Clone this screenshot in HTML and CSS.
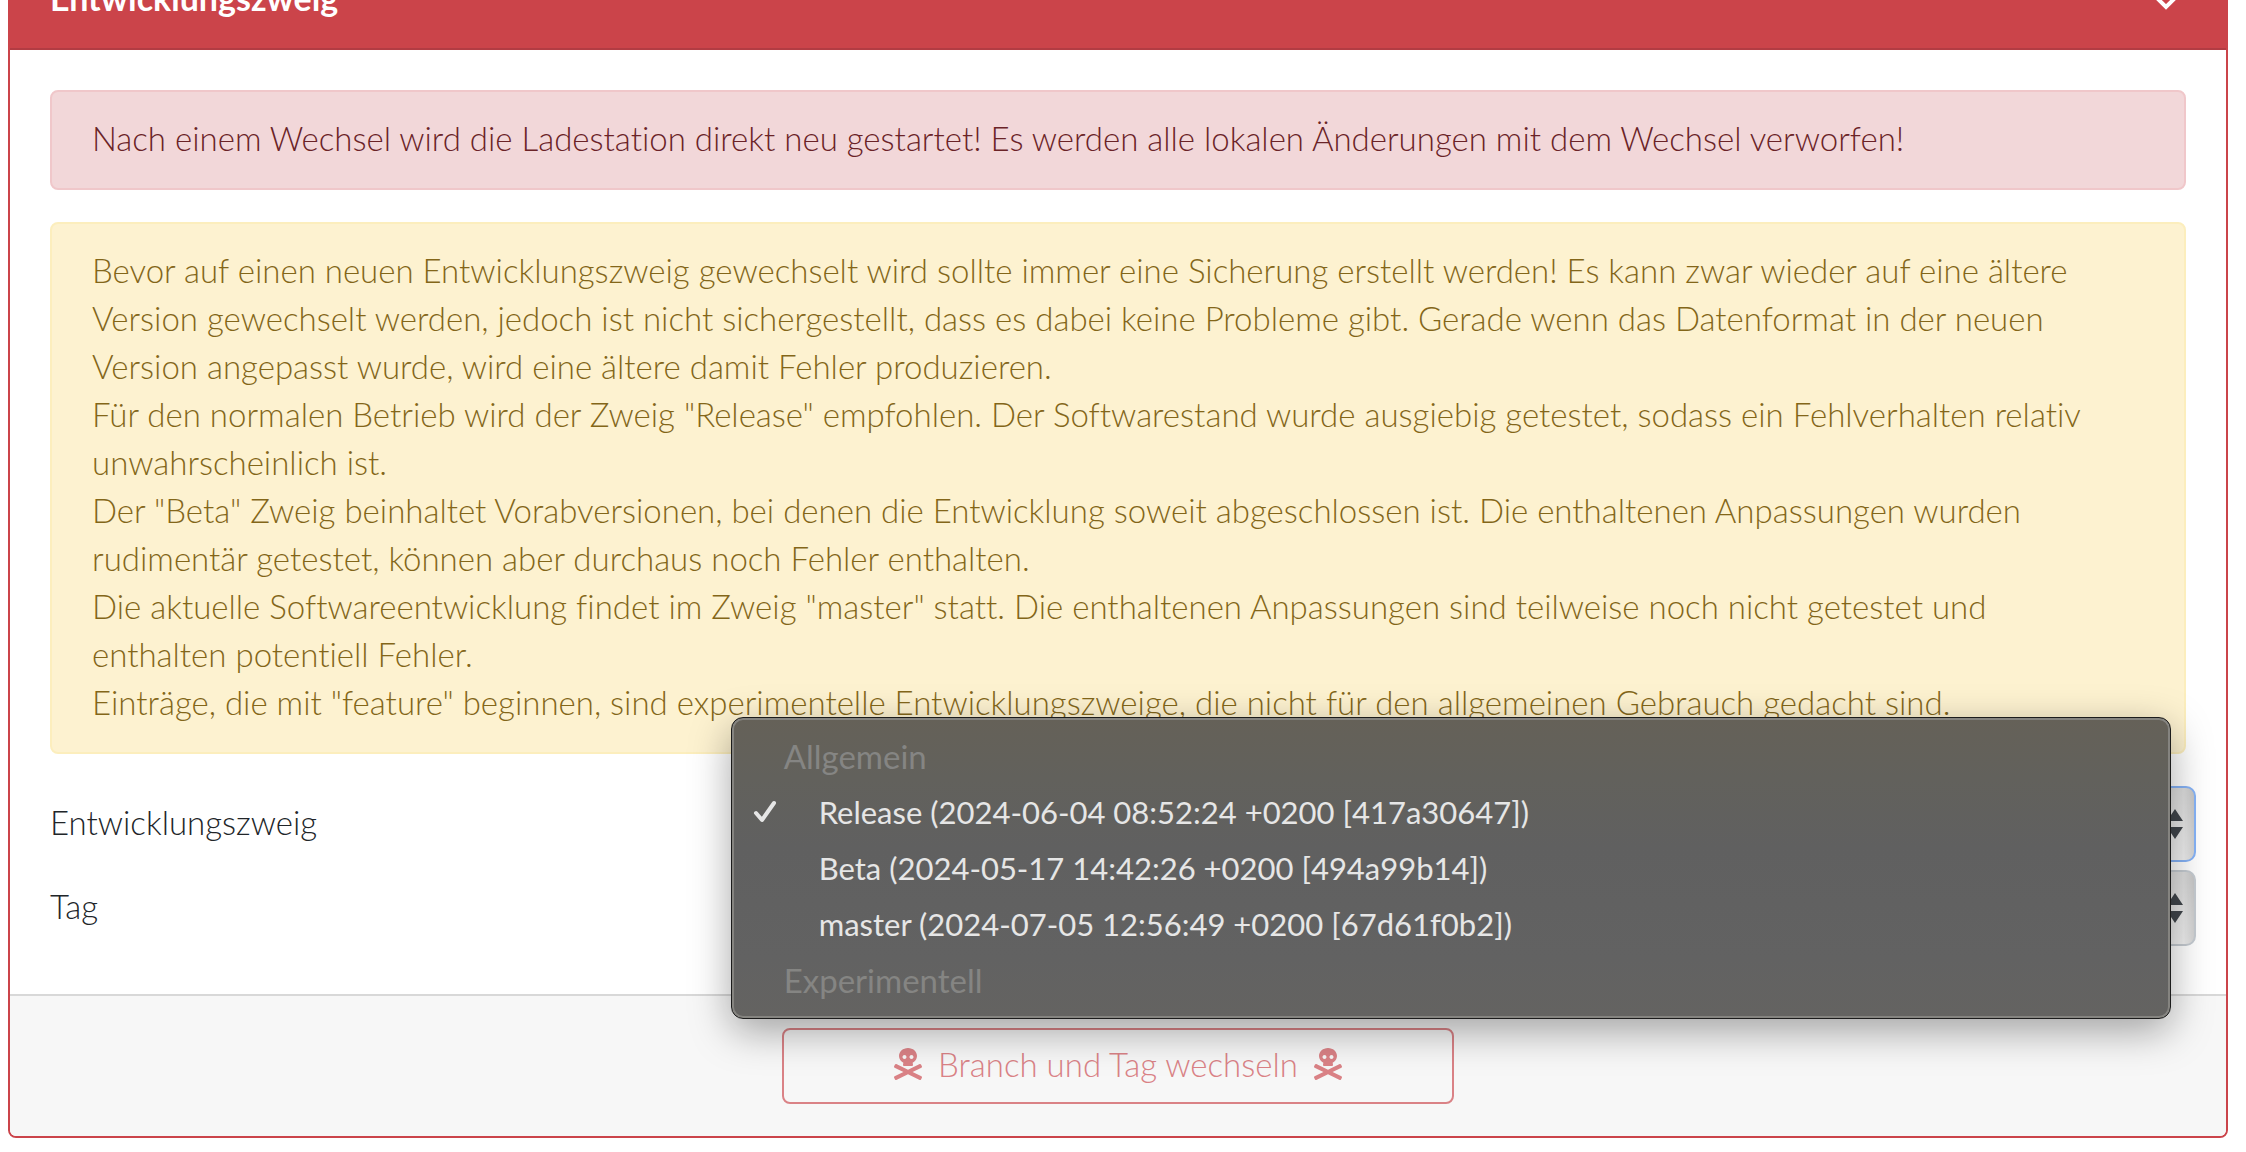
FILE: index.html
```html
<!DOCTYPE html>
<html lang="de">
<head>
<meta charset="utf-8">
<meta name="viewport" content="width=device-width, initial-scale=1">
<title>Entwicklungszweig</title>
<link rel="stylesheet" href="styles.css">
</head>
<body>
<svg class="sprite" aria-hidden="true">
  <symbol id="skull" viewBox="0 0 448 512">
    <path d="M439.15 453.06L297.17 384l141.99-69.06c7.9-3.95 11.11-13.56 7.15-21.46L432 264.85c-3.95-7.9-13.56-11.11-21.47-7.16L224 348.41 37.47 257.69c-7.9-3.95-17.51-.75-21.47 7.16L1.69 293.48c-3.95 7.9-.75 17.51 7.15 21.46L150.83 384 8.85 453.06c-7.9 3.95-11.11 13.56-7.15 21.47l14.31 28.63c3.95 7.9 13.56 11.11 21.47 7.15L224 419.59l186.53 90.72c7.9 3.95 17.51.75 21.47-7.15l14.31-28.63c3.95-7.91.74-17.52-7.16-21.47zM150 237.28l-5.48 25.87c-2.67 12.62 5.42 24.85 16.45 24.85h126.08c11.03 0 19.12-12.23 16.45-24.85l-5.5-25.87c41.78-22.41 70-62.75 70-109.28C368 57.31 303.53 0 224 0S80 57.31 80 128c0 46.53 28.22 86.87 70 109.28zM280 112c17.65 0 32 14.35 32 32s-14.35 32-32 32-32-14.35-32-32 14.35-32 32-32zm-112 0c17.65 0 32 14.35 32 32s-14.35 32-32 32-32-14.35-32-32 14.35-32 32-32z"/>
  </symbol>
  <symbol id="arrows" viewBox="0 0 16 30">
    <path d="M8 0l8 12H0zM8 30l8-12H0z"/>
  </symbol>
</svg>
<form class="card">
  <header class="card-header">
    <span class="card-title">Entwicklungszweig</span>
    <button class="collapse" type="button" aria-label="Einklappen">
      <svg viewBox="0 0 40 32" aria-hidden="true"><path d="M8 13l12 12 12-12"/></svg>
    </button>
  </header>
  <div class="card-body">
    <div class="alert alert-danger">Nach einem Wechsel wird die Ladestation direkt neu gestartet! Es werden alle lokalen Änderungen mit dem Wechsel verworfen!</div>
    <div class="alert alert-warning">
      Bevor auf einen neuen Entwicklungszweig gewechselt wird sollte immer eine Sicherung erstellt werden! Es kann zwar wieder auf eine ältere<br>
      Version gewechselt werden, jedoch ist nicht sichergestellt, dass es dabei keine Probleme gibt. Gerade wenn das Datenformat in der neuen<br>
      Version angepasst wurde, wird eine ältere damit Fehler produzieren.<br>
      Für den normalen Betrieb wird der Zweig "Release" empfohlen. Der Softwarestand wurde ausgiebig getestet, sodass ein Fehlverhalten relativ<br>
      unwahrscheinlich ist.<br>
      Der "Beta" Zweig beinhaltet Vorabversionen, bei denen die Entwicklung soweit abgeschlossen ist. Die enthaltenen Anpassungen wurden<br>
      rudimentär getestet, können aber durchaus noch Fehler enthalten.<br>
      Die aktuelle Softwareentwicklung findet im Zweig "master" statt. Die enthaltenen Anpassungen sind teilweise noch nicht getestet und<br>
      enthalten potentiell Fehler.<br>
      Einträge, die mit "feature" beginnen, sind experimentelle Entwicklungszweige, die nicht für den allgemeinen Gebrauch gedacht sind.
    </div>
    <div class="form-row">
      <label for="branch">Entwicklungszweig</label>
      <div class="select-wrap">
        <select id="branch" class="select select-focus"></select>
        <svg class="arrows" aria-hidden="true"><use href="#arrows"/></svg>
        <div class="menu" role="listbox" aria-label="Entwicklungszweig">
          <div class="menu-group">Allgemein</div>
          <div class="menu-item" role="option" aria-selected="true">
            <svg class="check" viewBox="0 0 24 24" aria-hidden="true"><path d="M3 13l6 7L21 3"/></svg>
            Release (2024-06-04 08:52:24 +0200 [417a30647])
          </div>
          <div class="menu-item" role="option">Beta (2024-05-17 14:42:26 +0200 [494a99b14])</div>
          <div class="menu-item" role="option">master (2024-07-05 12:56:49 +0200 [67d61f0b2])</div>
          <div class="menu-group">Experimentell</div>
        </div>
      </div>
    </div>
    <div class="form-row">
      <label for="tag">Tag</label>
      <div class="select-wrap">
        <select id="tag" class="select"></select>
        <svg class="arrows" aria-hidden="true"><use href="#arrows"/></svg>
      </div>
    </div>
  </div>
  <footer class="card-footer">
    <button class="switch" type="button">
      <svg class="skull" aria-hidden="true"><use href="#skull"/></svg>
      <span>Branch und Tag wechseln</span>
      <svg class="skull" aria-hidden="true"><use href="#skull"/></svg>
    </button>
  </footer>
</form>
</body>
</html>
```
FILE: styles.css
```css
* { box-sizing: border-box; }

body {
  margin: 0;
  overflow-x: hidden;
  background: #fff;
  color: #212529;
  font: 300 33px/48px "Avenir Next", Lato, "Open Sans", sans-serif;
  font-variant-ligatures: none;
}

button, select { font: inherit; }

.sprite { display: none; }

.card {
  margin: -50px 18px 14px 8px;
  border: 2px solid #cb444a;
  border-radius: 8px;
  background: #fff;
}

.card-header {
  display: flex;
  align-items: center;
  justify-content: space-between;
  padding: 22px 40px 26px;
  border-bottom: 2px solid #b23c43;
  background: #cb444a;
  color: #fff;
  font-size: 34px;
  font-weight: 700;
}

.collapse {
  display: flex;
  padding: 0;
  border: 0;
  background: none;
}

.collapse svg {
  width: 40px;
  height: 32px;
  fill: none;
  stroke: #fff;
  stroke-width: 4;
}

.card-body { padding: 40px; }

.alert {
  margin-bottom: 32px;
  padding: 22px 40px 26px;
  border: 2px solid;
  border-radius: 8px;
}

.alert-danger {
  border-color: #f0c7ca;
  background: #f2d7d9;
  color: #6a2327;
}

.alert-warning {
  border-color: #fceebd;
  background: #fdf2d0;
  color: #836619;
  white-space: nowrap;
}

.form-row {
  display: grid;
  grid-template-columns: 1fr 2fr;
  align-items: center;
  margin: 0 -10px 8px;
}

.form-row label { padding: 0 10px 4px; }

.select-wrap {
  position: relative;
  display: flex;
}

.select {
  width: 100%;
  height: 76px;
  border: 2px solid #c5cbd1;
  border-radius: 10px;
  appearance: none;
  background:
    linear-gradient(to left, rgba(0, 0, 0, .12), transparent 10px),
    linear-gradient(#dedede, #f2f2f2);
}

.select-focus { border-color: #86b3f7; }

.arrows {
  position: absolute;
  top: 23px;
  right: 13px;
  width: 16px;
  height: 30px;
  fill: #41464c;
}

.menu {
  position: absolute;
  z-index: 1;
  top: -69px;
  left: -28px;
  right: 25px;
  padding: 10px 0;
  border: 1px solid #1c1c1c;
  border-radius: 12px;
  background: linear-gradient(#656158, #62615c 60px, #606060 130px, #626262 240px, #646361);
  box-shadow: inset 0 0 0 2px #858480, 0 12px 40px rgba(0, 0, 0, .35);
  color: #e6e6e6;
  font-weight: 400;
  line-height: 56px;
  white-space: nowrap;
}

.menu-group {
  padding-left: 52px;
  color: #858583;
}

.menu-item {
  position: relative;
  padding-left: 87px;
  font-size: 31px;
}

.check {
  position: absolute;
  top: 16px;
  left: 21px;
  width: 24px;
  height: 24px;
  fill: none;
  stroke: #e6e6e6;
  stroke-width: 4;
  stroke-linecap: round;
  stroke-linejoin: round;
}

.card-footer {
  display: grid;
  grid-template-columns: 1fr 672px 1fr;
  padding: 32px 40px;
  border-top: 2px solid #d8d8d8;
  border-radius: 0 0 6px 6px;
  background: #f7f7f7;
}

.switch {
  display: flex;
  grid-column: 2;
  align-items: center;
  justify-content: center;
  gap: 16px;
  padding: 10px 24px 14px;
  border: 2px solid #da8286;
  border-radius: 8px;
  background: none;
  color: #da8286;
}

.skull {
  width: 28px;
  height: 32px;
  fill: currentColor;
}
```
